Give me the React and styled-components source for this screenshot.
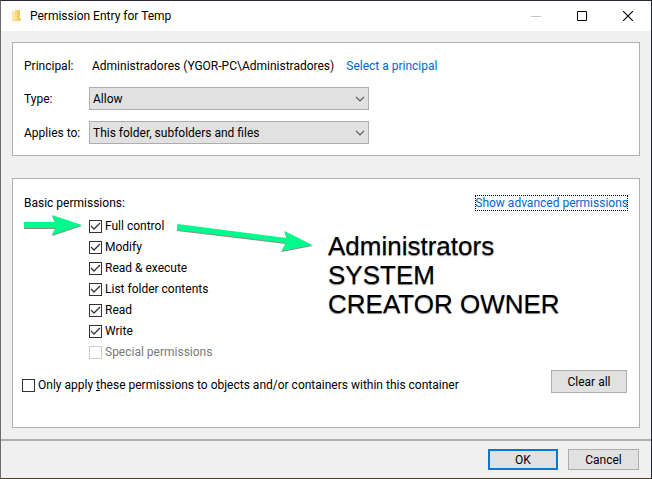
import React from 'react';
import styled, { createGlobalStyle } from 'styled-components';

const GlobalStyle = createGlobalStyle`
  *, *::before, *::after { box-sizing: border-box; }
  body {
    margin: 0;
    font-family: Roboto, "Noto Sans", sans-serif;
    font-size: 12px;
    line-height: 16px;
    color: #000;
  }
  button, select, input { font: inherit; color: inherit; margin: 0; }
`;

const Window = styled.main`
  display: flex;
  flex-direction: column;
  min-height: 100vh;
  background: #f0f0f0;
  border: 1px solid;
  border-color: #2a2636 #26263a #45402a #6c6c6c;
`;

const TitleBar = styled.header`
  display: flex;
  align-items: center;
  height: 30px;
  padding-left: 10px;
  background: #fff;
`;

const Title = styled.h1`
  flex: 1;
  margin: 0 0 0 8px;
  font-size: inherit;
  font-weight: 400;
`;

const WindowButton = styled.button`
  display: grid;
  place-items: center;
  width: 46px;
  height: 28px;
  padding: 0;
  border: 0;
  background: none;
`;

const Content = styled.div`
  flex: 1;
  display: flex;
  flex-direction: column;
  gap: 22px;
  padding: 11px;
`;

const Panel = styled.section`
  position: relative;
  background: #fff;
  border: 1px solid #b0b0b0;
`;

const EntryPanel = styled(Panel)`
  display: grid;
  grid-template-columns: 65px 1fr;
  grid-template-rows: 20px 23px 23px;
  row-gap: 11px;
  align-items: center;
  padding: 13px 11px 11px;
`;

const PrincipalRow = styled.div`
  display: flex;
  gap: 12px;
  padding-left: 3px;
`;

const Link = styled.a`
  color: #0066cc;
  text-decoration: none;
`;

const FocusedLink = styled(Link)`
  outline: 1px dotted #000;
  outline-offset: -1px;
`;

const SelectBox = styled.div`
  display: grid;
  align-items: center;
  width: 280px;

  > * { grid-area: 1 / 1; }
  > svg { justify-self: end; margin-right: 4px; pointer-events: none; }
`;

const Select = styled.select`
  appearance: none;
  width: 100%;
  height: 23px;
  padding: 0 20px 0 3px;
  border: 1px solid #adadad;
  border-radius: 0;
  background: #e1e1e1;
`;

const PermissionPanel = styled(Panel)`
  flex: 1;
  padding: 16px 11px;
`;

const PanelHeader = styled.div`
  display: flex;
  justify-content: space-between;
`;

const PermissionList = styled.ul`
  margin: 5px 0 0;
  padding: 0 0 0 65px;
  list-style: none;
`;

const CheckLabel = styled.label`
  display: flex;
  align-items: center;
  gap: 3px;
  height: 21px;
  color: ${(p) => (p.$disabled ? '#7a7a7a' : 'inherit')};
`;

const CheckMark = styled.span`
  display: grid;
  > * { grid-area: 1 / 1; }
  > svg { visibility: hidden; pointer-events: none; }
  > input:checked + svg { visibility: visible; }
`;

const CheckInput = styled.input`
  appearance: none;
  width: 13px;
  height: 13px;
  border: 1px solid #333;
  background: #fff;
  &:disabled { border-color: #ccc; }
`;

const CheckText = styled.span`
  padding-bottom: 2px;
`;

const PanelFooter = styled.div`
  display: flex;
  justify-content: space-between;
  margin: 7px 1px 0 -2px;
`;

const InheritArea = styled.div`
  padding-top: 5px;
`;

const Button = styled.button`
  width: ${(p) => p.$width || 71}px;
  height: ${(p) => p.$height || 21}px;
  padding: 0;
  border: ${(p) => (p.$primary ? '2px solid #0078d7' : '1px solid #adadad')};
  border-radius: 0;
  background: #e1e1e1;
  line-height: 14px;
`;

const Footer = styled.footer`
  display: flex;
  justify-content: flex-end;
  gap: 10px;
  padding: 8px 12px;
  border-top: 2px solid #b0b0b0;
`;

const Arrows = styled.svg`
  position: absolute;
  left: 11px;
  top: 34px;
  pointer-events: none;
  filter: drop-shadow(0 1px 0 rgba(0, 0, 0, 0.45));
`;

const Note = styled.p`
  position: absolute;
  left: 315px;
  top: 53px;
  margin: 0;
  font-family: "Liberation Sans", Arial, sans-serif;
  font-size: 26px;
  line-height: 29px;
  white-space: pre-line;
  text-shadow: 0 1px 1px rgba(0, 0, 0, 0.5);
`;

const FolderIcon = () => (
  <svg width="11" height="14" viewBox="0 0 11 14" aria-hidden="true">
    <path d="M4 1h5v8l1 1v2H4z" fill="#f3ca63" />
    <path d="M1 1l3 2v10l-3-1z" fill="#ffe7a2" />
    <path d="M4 3l2-2v10l-2 1z" fill="#fbdc8a" />
  </svg>
);

const Dropdown = ({ id, options }) => (
  <SelectBox>
    <Select id={id} defaultValue={options[0]}>
      {options.map((o) => (
        <option key={o}>{o}</option>
      ))}
    </Select>
    <svg width="10" height="6" viewBox="0 0 10 6" aria-hidden="true">
      <path d="M1 .8l4 4 4-4" fill="none" stroke="#555" strokeWidth="1.2" />
    </svg>
  </SelectBox>
);

const Check = ({ checked, disabled, children }) => (
  <CheckLabel $disabled={disabled}>
    <CheckMark>
      <CheckInput type="checkbox" defaultChecked={checked} disabled={disabled} />
      <svg width="13" height="13" viewBox="0 0 13 13" aria-hidden="true">
        <path d="M2 6l3 3 6-6" fill="none" stroke="#333" strokeWidth="1.3" />
      </svg>
    </CheckMark>
    <CheckText>{children}</CheckText>
  </CheckLabel>
);

const permissions = [
  { name: 'Full control', checked: true },
  { name: 'Modify', checked: true },
  { name: 'Read & execute', checked: true },
  { name: 'List folder contents', checked: true },
  { name: 'Read', checked: true },
  { name: 'Write', checked: true },
  { name: 'Special permissions', disabled: true },
];

export default function App() {
  return (
    <>
      <GlobalStyle />
      <Window>
        <TitleBar>
          <FolderIcon />
          <Title>Permission Entry for Temp</Title>
          <WindowButton aria-label="Minimize" disabled>
            <svg width="10" height="10" viewBox="0 0 10 10">
              <path d="M0 5.5h10" stroke="#c4c4c4" />
            </svg>
          </WindowButton>
          <WindowButton aria-label="Maximize">
            <svg width="10" height="10" viewBox="0 0 10 10">
              <path d="M.5 .5h9v9h-9z" fill="none" stroke="#000" />
            </svg>
          </WindowButton>
          <WindowButton aria-label="Close">
            <svg width="10" height="10" viewBox="0 0 10 10">
              <path d="M0 0l10 10M10 0L0 10" stroke="#000" strokeWidth="1.1" />
            </svg>
          </WindowButton>
        </TitleBar>
        <Content>
          <EntryPanel>
            <span>Principal:</span>
            <PrincipalRow>
              <span>Administradores (YGOR-PC\Administradores)</span>
              <Link href="#principal">Select a principal</Link>
            </PrincipalRow>
            <label htmlFor="type">Type:</label>
            <Dropdown id="type" options={['Allow']} />
            <label htmlFor="applies">Applies to:</label>
            <Dropdown id="applies" options={['This folder, subfolders and files']} />
          </EntryPanel>
          <PermissionPanel>
            <PanelHeader>
              <span>Basic permissions:</span>
              <FocusedLink href="#advanced">Show advanced permissions</FocusedLink>
            </PanelHeader>
            <PermissionList>
              {permissions.map(({ name, ...state }) => (
                <li key={name}>
                  <Check {...state}>{name}</Check>
                </li>
              ))}
            </PermissionList>
            <PanelFooter>
              <InheritArea>
                <Check>
                  Only apply <u>t</u>hese permissions to objects and/or containers within this
                  container
                </Check>
              </InheritArea>
              <Button type="button" $width={76} $height={23}>Clear all</Button>
            </PanelFooter>
            <Arrows width="290" height="42" viewBox="0 0 290 42" aria-hidden="true">
              <path
                d="M0 9h31L28 2l30 10-30 10 3-7H0zM153.5 11l109 14-2-7 28 14-31 6 4-8-108.5-13z"
                fill="#00fa8c"
              />
            </Arrows>
            <Note>{'Administrators\nSYSTEM\nCREATOR OWNER'}</Note>
          </PermissionPanel>
        </Content>
        <Footer>
          <Button type="button" $primary $width={70}>OK</Button>
          <Button type="button">Cancel</Button>
        </Footer>
      </Window>
    </>
  );
}
